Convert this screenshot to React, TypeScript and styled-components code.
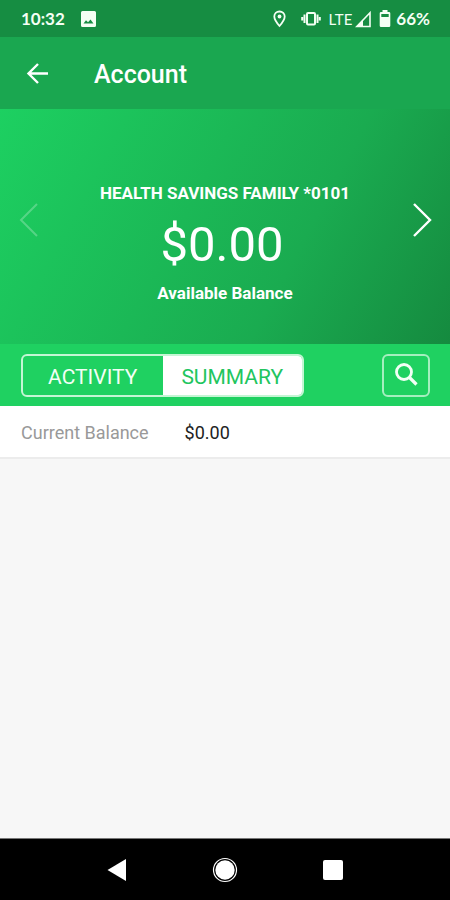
import React, { useState } from "react";
import styled, { createGlobalStyle } from "styled-components";

const GlobalStyle = createGlobalStyle`
  *, *::before, *::after { box-sizing: border-box; }
  body { margin: 0; background: #f7f7f7; font-family: Roboto, "Liberation Sans", sans-serif; }
  button { font: inherit; padding: 0; margin: 0; border: 0; background: none; color: inherit; cursor: pointer; }
  svg { display: block; }
`;

const Screen = styled.div`
  display: flex;
  flex-direction: column;
  min-height: 100vh;
  background: #f7f7f7;
`;

const StatusBar = styled.div`
  display: flex;
  align-items: center;
  justify-content: space-between;
  height: 37px;
  padding: 1px 20px 0 21px;
  background: #168d42;
  color: #f4fff4;
  font: 700 17px/20px Lato, Roboto, sans-serif;
`;

const StatusGroup = styled.div<{ $gap: number }>`
  display: flex;
  align-items: center;
  gap: ${(p) => p.$gap}px;
`;

const Network = styled.span`
  font-weight: 400;
  font-size: 15px;
`;

const AppBar = styled.header`
  display: flex;
  align-items: center;
  gap: 44px;
  height: 72px;
  padding: 0 24px;
  background: #1aa750;
  color: #fff;
`;

const IconButton = styled.button`
  display: flex;
  align-items: center;
  justify-content: center;
  flex: none;
`;

const Title = styled.h1`
  margin: 0;
  padding-top: 4px;
  font-size: 25px;
  line-height: 32px;
  font-weight: 500;
`;

const Hero = styled.section`
  display: flex;
  align-items: center;
  justify-content: space-between;
  height: 235px;
  padding: 0 17px;
  background: linear-gradient(118deg, #1dd061 0%, #1aab50 65%, #158a3f 100%);
  color: #fff;
`;

const PageButton = styled(IconButton)`
  height: 40px;
  margin-bottom: 14px;
  &:disabled { opacity: 0.25; cursor: default; }
`;

const Balance = styled.div`
  display: flex;
  flex-direction: column;
  align-items: center;
  padding-top: 32px;
`;

const Caption = styled.p`
  margin: 0;
  font-weight: 700;
  font-size: 17px;
  line-height: 24px;
`;

const Amount = styled.p`
  margin: 10px 6px 6px 0;
  font-size: 49px;
  line-height: 60px;
`;

const Toolbar = styled.div`
  display: flex;
  align-items: center;
  justify-content: space-between;
  height: 62px;
  padding: 0 20px 0 21px;
  background: #1fd161;
`;

const Tabs = styled.div`
  display: flex;
  width: 283px;
  height: 43px;
  border: 2px solid #c4f6d4;
  border-radius: 6px;
  overflow: hidden;
  background: #1fd161;
`;

const Tab = styled.button<{ $active: boolean }>`
  flex: 1;
  padding-top: 3px;
  font-size: 21px;
  line-height: 24px;
  background: ${(p) => (p.$active ? "#fff" : "transparent")};
  color: ${(p) => (p.$active ? "#22c55e" : "#f2fff5")};
`;

const SearchButton = styled(IconButton)`
  width: 48px;
  height: 43px;
  border: 2px solid #a5efbf;
  border-radius: 6px;
  color: #f2fff5;
`;

const Details = styled.dl`
  display: flex;
  align-items: center;
  gap: 36px;
  height: 53px;
  margin: 0;
  padding: 3px 21px 0;
  background: #fff;
  border-bottom: 2px solid #ececec;
  font-size: 18px;
  line-height: 24px;
`;

const Label = styled.dt`
  color: #999;
`;

const Value = styled.dd`
  margin: 0;
  color: #222;
`;

const Content = styled.main`
  flex: 1;
`;

const NavBar = styled.nav`
  display: flex;
  justify-content: center;
  height: 62px;
  padding: 0 14%;
  background: #000;
  border-top: 1px solid #777;
  color: #fff;
`;

const NavButton = styled(IconButton)`
  flex: 1;
`;

export default function App() {
  const [tab, setTab] = useState("SUMMARY");
  return (
    <Screen>
      <GlobalStyle />
      <StatusBar>
        <StatusGroup $gap={16}>
          <span>10:32</span>
          <svg width="15" height="16" viewBox="0 0 15 16" aria-hidden="true">
            <path fill="currentColor" fillRule="evenodd" d="M1.500 0h12A1.500 1.500 0 0 1 15 1.500v13a1.500 1.500 0 0 1-1.500 1.500h-12A1.500 1.500 0 0 1 0 14.500v-13A1.500 1.500 0 0 1 1.500 0zM2.500 12.500h10L9.500 8.500 7 11.300 5 9.300z" />
          </svg>
        </StatusGroup>
        <StatusGroup $gap={3}>
          <StatusGroup $gap={15}>
            <svg width="13" height="18" viewBox="0 0 13 18" fill="none" stroke="currentColor" strokeWidth="1.800" aria-hidden="true">
              <path d="M6.500 1.500c-3 0-5.200 2.200-5.200 5C1.300 10 6.500 16 6.500 16s5.200-6 5.200-9.500c0-2.800-2.200-5-5.200-5z" />
              <circle cx="6.500" cy="6.500" r="1.900" fill="currentColor" stroke="none" />
            </svg>
            <StatusGroup $gap={8}>
              <svg width="20" height="16" viewBox="0 0 20 16" fill="none" stroke="currentColor" strokeWidth="2" aria-hidden="true">
                <rect x="6" y="2" width="8" height="11.500" rx="1" />
                <path d="M3.500 3.500v8.500M16.500 3.500v8.500M1.200 6v3.500M18.800 6v3.500" />
              </svg>
              <Network>LTE</Network>
            </StatusGroup>
          </StatusGroup>
          <StatusGroup $gap={8}>
            <svg width="16" height="17" viewBox="0 0 16 17" aria-hidden="true">
              <path d="M15 1.800V15.500H1.800z" fill="none" stroke="currentColor" strokeWidth="1.600" />
              <path d="M1 16 8 8.500V16z" fill="currentColor" />
            </svg>
            <StatusGroup $gap={5}>
              <svg width="12" height="18" viewBox="0 0 12 18" aria-hidden="true">
                <path fill="currentColor" fillRule="evenodd" d="M3.500 0h5v2H10a1.300 1.300 0 0 1 1.300 1.300v12.400a1.300 1.300 0 0 1-1.300 1.300H2a1.300 1.300 0 0 1-1.300-1.300V3.300A1.300 1.300 0 0 1 2 2h1.500zM2.300 4v3h7.400V4z" />
              </svg>
              <span>66%</span>
            </StatusGroup>
          </StatusGroup>
        </StatusGroup>
      </StatusBar>
      <AppBar>
        <IconButton aria-label="Back">
          <svg width="26" height="24" viewBox="0 0 26 24" fill="none" stroke="currentColor" strokeWidth="2.400">
            <path d="M24 12.500H4.500M14 3 4.500 12.500 14 22" />
          </svg>
        </IconButton>
        <Title>Account</Title>
      </AppBar>
      <Hero>
        <PageButton aria-label="Previous account" disabled>
          <svg width="24" height="36" viewBox="0 0 24 36" fill="none" stroke="currentColor" strokeWidth="2">
            <path d="M20 2 4 18l16 16" />
          </svg>
        </PageButton>
        <Balance>
          <Caption>HEALTH SAVINGS FAMILY *0101</Caption>
          <Amount>$0.00</Amount>
          <Caption>Available Balance</Caption>
        </Balance>
        <PageButton aria-label="Next account">
          <svg width="24" height="36" viewBox="0 0 24 36" fill="none" stroke="currentColor" strokeWidth="2.400">
            <path d="m5 2 16 16L5 34" />
          </svg>
        </PageButton>
      </Hero>
      <Toolbar>
        <Tabs role="tablist">
          {["ACTIVITY", "SUMMARY"].map((name) => (
            <Tab key={name} role="tab" aria-selected={tab === name} $active={tab === name} onClick={() => setTab(name)}>
              {name}
            </Tab>
          ))}
        </Tabs>
        <SearchButton aria-label="Search">
          <svg width="24" height="26" viewBox="0 0 24 26" fill="none" stroke="currentColor">
            <circle cx="10" cy="10" r="7.500" strokeWidth="2.800" />
            <path d="m15 15 7.500 7.500" strokeWidth="3.200" />
          </svg>
        </SearchButton>
      </Toolbar>
      <Content>
        <Details>
          <Label>Current Balance</Label>
          <Value>$0.00</Value>
        </Details>
      </Content>
      <NavBar aria-label="System">
        <NavButton aria-label="Back">
          <svg width="20" height="24" viewBox="0 0 20 24" fill="currentColor">
            <path d="M0.500 12 19 1v22z" />
          </svg>
        </NavButton>
        <NavButton aria-label="Home">
          <svg width="26" height="26" viewBox="0 0 26 26">
            <circle cx="13" cy="13" r="9.700" fill="currentColor" />
            <circle cx="13" cy="13" r="11.500" fill="none" stroke="currentColor" strokeWidth="1.200" />
          </svg>
        </NavButton>
        <NavButton aria-label="Recent apps">
          <svg width="22" height="22" viewBox="0 0 22 22">
            <rect x="1" y="1" width="20" height="20" rx="2" fill="currentColor" />
          </svg>
        </NavButton>
      </NavBar>
    </Screen>
  );
}
